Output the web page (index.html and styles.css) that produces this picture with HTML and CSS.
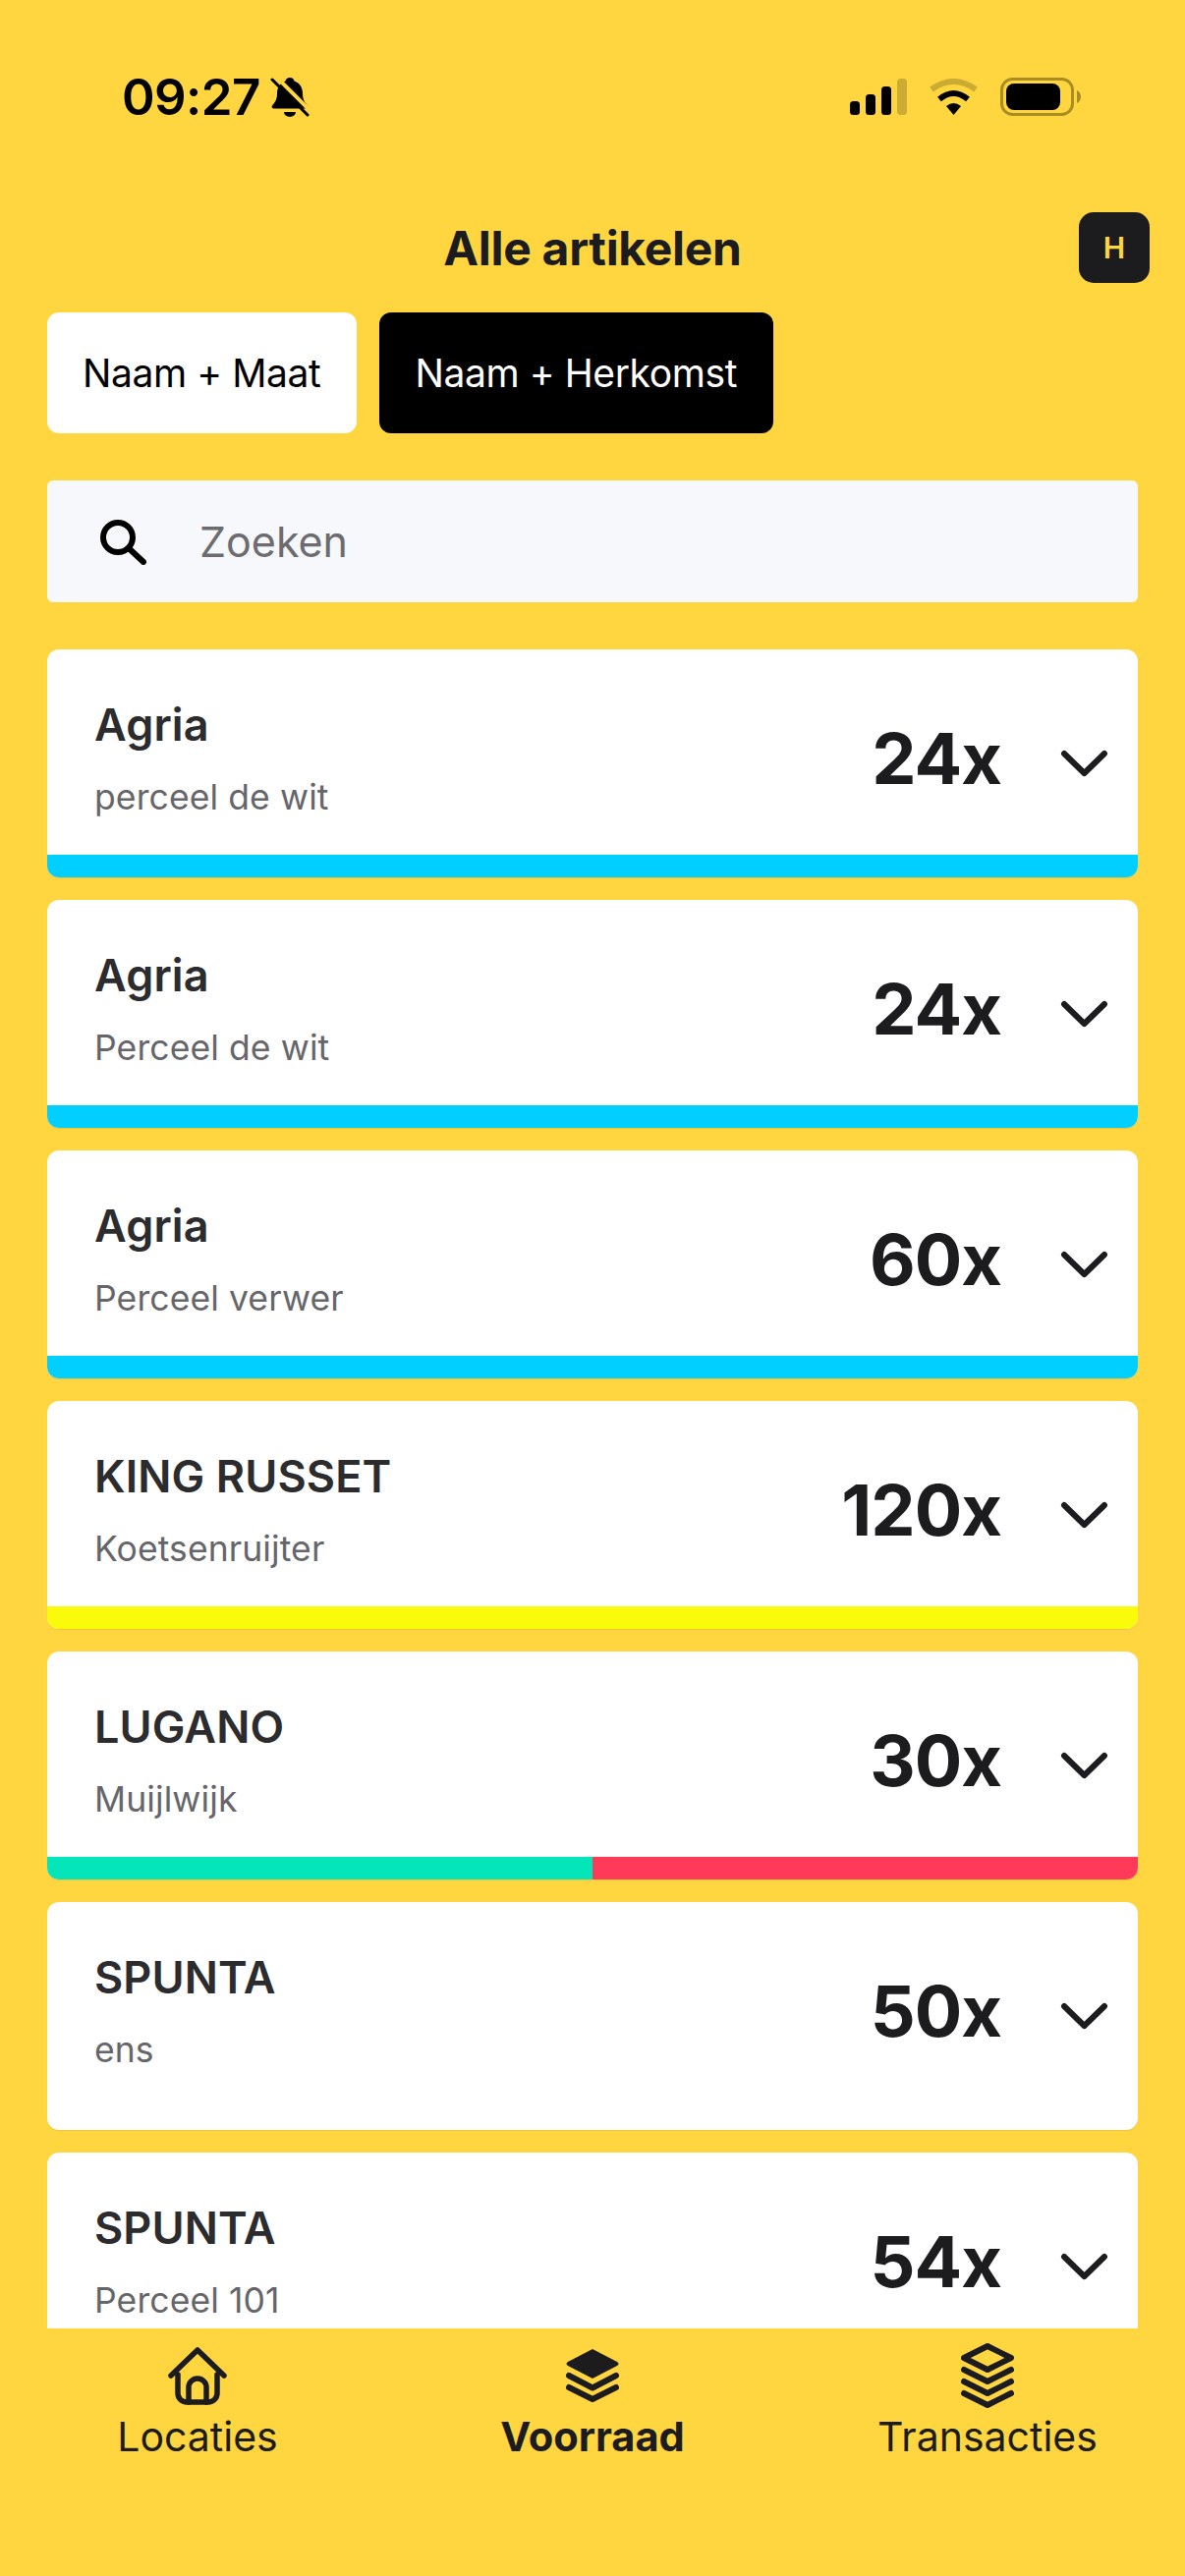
FILE: index.html
```html
<!DOCTYPE html>
<html lang="nl">
<head>
    <meta charset="UTF-8">
    <meta name="viewport" content="width=device-width, initial-scale=1.0">
    <title>Alle artikelen</title>
    <link rel="stylesheet" href="styles.css">
</head>
<body>
    <div class="app">
        <div class="status-bar">
            <div class="status-left">
                <span class="time">09:27</span>
                <svg class="bell" width="40" height="43" viewBox="0 0 40 43">
                    <path d="M20 2c2.5 0 4 1.500 4.500 3.500c6 2 8.500 7 8.500 13c0 6 2.500 9 5 12c1 2 0 3-2 3H4c-2 0-3-1-2-3c2.500-3 5-6 5-12c0-6 2.500-11 8.500-13c.5-2 2-3.500 4.500-3.500z" fill="#000"/>
                    <path d="M14 37a6 5 0 0 0 12 0z" fill="#000"/>
                    <path d="M5 0L42 37" stroke="#ffd640" stroke-width="4"/>
                    <path d="M2 4L38 40" stroke="#000" stroke-width="3" stroke-linecap="round"/>
                </svg>
            </div>
            <div class="status-right">
                <svg width="58" height="37" viewBox="0 0 58 37">
                    <rect x="0" y="23" width="10" height="14" rx="3.500"/>
                    <rect x="16" y="16" width="10" height="21" rx="3.500"/>
                    <rect x="32" y="8" width="10" height="29" rx="3.500"/>
                    <rect x="48" y="0" width="10" height="37" rx="3.500" opacity=".2"/>
                </svg>
                <svg width="51" height="37" viewBox="0 0 51 37">
                    <path d="M3 11Q25.500-5 48 11" fill="none" stroke="#000" stroke-width="6" opacity=".2"/>
                    <path d="M11 21Q25.500 9 40 21" fill="none" stroke="#000" stroke-width="6"/>
                    <path d="M18 28Q25.500 22 33 28L25.500 37z"/>
                </svg>
                <svg width="82" height="39" viewBox="0 0 82 39">
                    <rect x="1.500" y="1.500" width="72" height="36" rx="11" fill="none" stroke="#a98c22" stroke-width="3"/>
                    <rect x="6" y="6" width="55" height="27" rx="8"/>
                    <path d="M78 13c2.500 1 4 3.500 4 6.500s-1.500 5.500-4 6.500z" fill="#a98c22"/>
                </svg>
            </div>
        </div>

        <div class="page-header">
            <h1>Alle artikelen</h1>
            <div class="avatar">H</div>
        </div>

        <div class="tabs">
            <div class="tab">Naam + Maat</div>
            <div class="tab active">Naam + Herkomst</div>
        </div>

        <div class="search">
            <svg width="50" height="47" viewBox="0 0 50 47">
                <circle cx="20" cy="19" r="15" fill="none" stroke="#000" stroke-width="6"/>
                <path d="M31 30L46 44" stroke="#000" stroke-width="6" stroke-linecap="round"/>
            </svg>
            <span>Zoeken</span>
        </div>

        <div class="list">
            <div class="card">
                <div class="card-main">
                    <div class="card-text"><div class="name">Agria</div><div class="origin">perceel de wit</div></div>
                    <div class="count">24x</div>
                    <svg class="chevron" width="49" height="28" viewBox="0 0 49 28"><path d="M4 4L24.500 24L45 4"/></svg>
                </div>
                <div class="bar"><div class="bg-blue"></div></div>
            </div>
            <div class="card">
                <div class="card-main">
                    <div class="card-text"><div class="name">Agria</div><div class="origin">Perceel de wit</div></div>
                    <div class="count">24x</div>
                    <svg class="chevron" width="49" height="28" viewBox="0 0 49 28"><path d="M4 4L24.500 24L45 4"/></svg>
                </div>
                <div class="bar"><div class="bg-blue"></div></div>
            </div>
            <div class="card">
                <div class="card-main">
                    <div class="card-text"><div class="name">Agria</div><div class="origin">Perceel verwer</div></div>
                    <div class="count">60x</div>
                    <svg class="chevron" width="49" height="28" viewBox="0 0 49 28"><path d="M4 4L24.500 24L45 4"/></svg>
                </div>
                <div class="bar"><div class="bg-blue"></div></div>
            </div>
            <div class="card">
                <div class="card-main">
                    <div class="card-text"><div class="name">KING RUSSET</div><div class="origin">Koetsenruijter</div></div>
                    <div class="count">120x</div>
                    <svg class="chevron" width="49" height="28" viewBox="0 0 49 28"><path d="M4 4L24.500 24L45 4"/></svg>
                </div>
                <div class="bar"><div class="bg-yellow"></div></div>
            </div>
            <div class="card">
                <div class="card-main">
                    <div class="card-text"><div class="name">LUGANO</div><div class="origin">Muijlwijk</div></div>
                    <div class="count">30x</div>
                    <svg class="chevron" width="49" height="28" viewBox="0 0 49 28"><path d="M4 4L24.500 24L45 4"/></svg>
                </div>
                <div class="bar"><div class="bg-green"></div><div class="bg-red"></div></div>
            </div>
            <div class="card">
                <div class="card-main">
                    <div class="card-text"><div class="name">SPUNTA</div><div class="origin">ens</div></div>
                    <div class="count">50x</div>
                    <svg class="chevron" width="49" height="28" viewBox="0 0 49 28"><path d="M4 4L24.500 24L45 4"/></svg>
                </div>
                <div class="bar"></div>
            </div>
            <div class="card">
                <div class="card-main">
                    <div class="card-text"><div class="name">SPUNTA</div><div class="origin">Perceel 101</div></div>
                    <div class="count">54x</div>
                    <svg class="chevron" width="49" height="28" viewBox="0 0 49 28"><path d="M4 4L24.500 24L45 4"/></svg>
                </div>
                <div class="bar"></div>
            </div>
        </div>

        <div class="nav">
            <div class="nav-item">
                <div class="nav-icon">
                    <svg width="60" height="59" viewBox="0 0 60 59" fill="none" stroke="#1c1c1e" stroke-width="5.500" stroke-linecap="round" stroke-linejoin="round">
                        <path d="M3 29L30 3L57 29"/>
                        <path d="M10 28V47a9 9 0 0 0 9 9H41a9 9 0 0 0 9-9V28"/>
                        <path d="M21 56V41a9 9 0 0 1 18 0V56"/>
                    </svg>
                </div>
                <span>Locaties</span>
            </div>
            <div class="nav-item current">
                <div class="nav-icon">
                    <svg width="54" height="54" viewBox="0 0 54 54" fill="none" stroke="#1c1c1e" stroke-width="6" stroke-linecap="round" stroke-linejoin="round">
                        <path d="M27 0L52 13q3 2 0 4L27 30L2 17q-3-2 0-4z" fill="#1c1c1e" stroke="none"/>
                        <path d="M3 27L27 39.500L51 27"/>
                        <path d="M3 39L27 51L51 39"/>
                    </svg>
                </div>
                <span>Voorraad</span>
            </div>
            <div class="nav-item">
                <div class="nav-icon">
                    <svg width="54" height="66" viewBox="0 0 54 66" fill="none" stroke="#1c1c1e" stroke-width="6" stroke-linecap="round" stroke-linejoin="round">
                        <path d="M27 3L51 15L27 27L3 15z"/>
                        <path d="M3 27L27 39L51 27"/>
                        <path d="M3 39L27 51L51 39"/>
                        <path d="M3 51L27 63L51 51"/>
                    </svg>
                </div>
                <span>Transacties</span>
            </div>
        </div>
    </div>
</body>
</html>
```

FILE: styles.css
```css
* {
    box-sizing: border-box;
}
body {
    margin: 0;
    background-color: #ffd640;
    font-family: Inter, "Liberation Sans", sans-serif;
    color: #1c1c1e;
}
.app {
    display: flex;
    flex-direction: column;
    width: 1206px;
    height: 2622px;
    overflow: hidden;
}
.status-bar {
    display: flex;
    justify-content: space-between;
    align-items: center;
    height: 196px;
    padding: 0 106px 0 124px;
    color: #000;
    flex-shrink: 0;
}
.status-left {
    display: flex;
    align-items: center;
    gap: 10px;
}
.time {
    font-size: 51px;
    font-weight: 600;
    letter-spacing: -0.6px;
}
.status-right {
    display: flex;
    align-items: center;
    gap: 22px;
}
.page-header {
    position: relative;
    display: flex;
    justify-content: center;
    align-items: center;
    height: 72px;
    margin-top: 20px;
    flex-shrink: 0;
}
.page-header h1 {
    margin: 0;
    font-size: 48px;
    font-weight: 700;
    letter-spacing: -0.3px;
}
.avatar {
    position: absolute;
    top: 0;
    right: 36px;
    display: flex;
    justify-content: center;
    align-items: center;
    width: 72px;
    height: 72px;
    border-radius: 15px;
    background-color: #1c1c1e;
    color: #ffd640;
    font-size: 30px;
    font-weight: 600;
}
.tabs {
    display: flex;
    gap: 23px;
    margin-top: 30px;
    padding: 0 48px;
    flex-shrink: 0;
}
.tab {
    display: flex;
    align-items: center;
    height: 123px;
    padding: 0 37px 0 36px;
    border-radius: 12px;
    background-color: #fff;
    color: #000;
    font-size: 39px;
    letter-spacing: -0.4px;
}
.tab.active {
    background-color: #000;
    color: #fff;
}
.search {
    display: flex;
    align-items: center;
    gap: 53px;
    height: 124px;
    margin: 48px 48px 0;
    padding-left: 52px;
    border-radius: 6px;
    background-color: #f6f8fb;
    color: #6c6c70;
    font-size: 43px;
    flex-shrink: 0;
}
.list {
    display: flex;
    flex-direction: column;
    gap: 23px;
    height: 1709px;
    margin-top: 48px;
    padding: 0 48px;
    overflow: hidden;
    flex-shrink: 0;
}
.card {
    display: flex;
    flex-direction: column;
    height: 232px;
    border-radius: 12px;
    background-color: #fff;
    box-shadow: 0 1px 1px rgba(0, 0, 0, .08);
    overflow: hidden;
    flex-shrink: 0;
}
.card-main {
    display: flex;
    align-items: center;
    height: 209px;
    padding: 0 30px 0 48px;
}
.card-text {
    flex: 1;
    align-self: flex-start;
    padding-top: 51px;
}
.name {
    font-size: 45px;
    line-height: 52px;
    font-weight: 600;
    letter-spacing: 0.1px;
    color: #2c2c2e;
}
.origin {
    margin-top: 26px;
    font-size: 35.500px;
    line-height: 44px;
    letter-spacing: 0.1px;
    color: #66666a;
}
.count {
    margin-top: 11px;
    font-size: 72px;
    font-weight: 700;
    letter-spacing: -1px;
}
.chevron {
    margin: 23px 0 0 60px;
    fill: none;
    stroke: #1c1c1e;
    stroke-width: 6;
    stroke-linecap: round;
    stroke-linejoin: round;
}
.bar {
    display: flex;
    height: 23px;
}
.bar div {
    flex: 1;
}
.bg-blue {
    background-color: #00cfff;
}
.bg-yellow {
    background-color: #f9fb0a;
}
.bg-green {
    background-color: #04e6ba;
}
.bg-red {
    background-color: #ff3958;
}
.nav {
    display: grid;
    grid-template-columns: repeat(3, 1fr);
    flex-shrink: 0;
}
.nav-item {
    display: flex;
    flex-direction: column;
    align-items: center;
    font-size: 41px;
}
.nav-icon {
    display: flex;
    justify-content: center;
    align-items: center;
    height: 66px;
    margin-top: 15px;
}
.nav-item span {
    line-height: 52px;
    margin-top: 3px;
}
.current span {
    font-size: 41.600px;
    font-weight: 700;
}
```
